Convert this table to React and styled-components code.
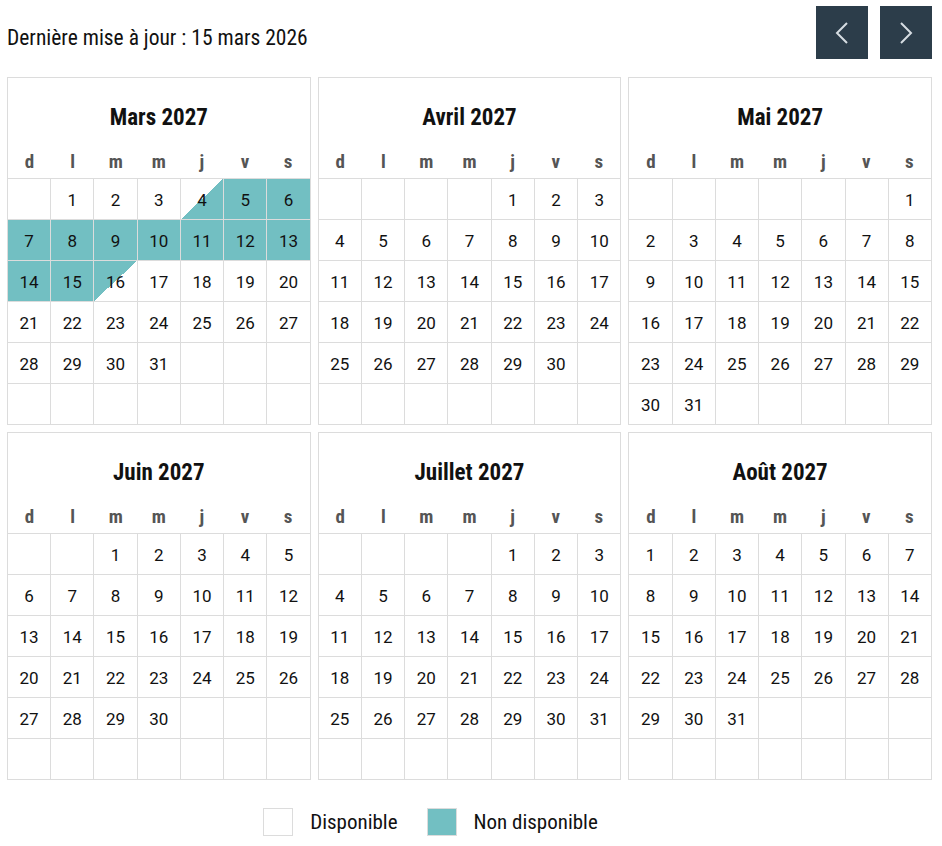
import styled, { createGlobalStyle, css } from 'styled-components';

const Global = createGlobalStyle`
  body {
    margin: 0;
    background: #fff;
    font-family: "Liberation Sans Narrow", "Roboto Condensed", Roboto, sans-serif;
    color: #111;
  }
`;

const TEAL = '#72bfc2';
const LINE = '#dcdcdc';

const Page = styled.div`
  width: 925px;
  padding: 0 10px 0 7px;
`;

const TopBar = styled.div`
  display: flex;
  align-items: center;
  justify-content: space-between;
  padding-top: 6px;
  margin-bottom: 18px;
`;

const Updated = styled.div`
  font-size: 21.5px;
  padding-top: 10px;
`;

const Nav = styled.div`
  display: flex;
  gap: 12px;
`;

const NavButton = styled.button`
  width: 52px;
  height: 53px;
  border: none;
  background: #2c3d4a;
  display: flex;
  align-items: center;
  justify-content: center;
  padding: 0;
  cursor: pointer;
`;

const Months = styled.div`
  display: grid;
  grid-template-columns: repeat(3, 1fr);
  gap: 7px 7px;
`;

const Month = styled.div`
  border: 1px solid ${LINE};
`;

const Title = styled.div`
  padding-top: 20px;
  height: 40px;
  line-height: 40px;
  text-align: center;
  font-weight: bold;
  font-size: 23px;
`;

const WeekDays = styled.div`
  display: grid;
  grid-template-columns: repeat(7, 1fr);
  padding-top: 8px;
  height: 32px;
  line-height: 32px;
`;

const WeekDay = styled.div`
  text-align: center;
  font-weight: bold;
  font-size: 19px;
  color: #555;
`;

const Days = styled.div`
  display: grid;
  grid-template-columns: repeat(7, 1fr);
  grid-auto-rows: 40px;
  gap: 1px;
  background: ${LINE};
  border-top: 1px solid ${LINE};
`;

const Day = styled.div`
  background: #fff;
  display: flex;
  align-items: center;
  justify-content: center;
  padding-top: 1px;
  font-family: Roboto, "Liberation Sans", sans-serif;
  font-size: 17px;
  color: #111;
  ${p => p.$state === 'full' && css`background: ${TEAL};`}
  ${p => p.$state === 'in' && css`background: linear-gradient(to bottom right, #fff 50%, ${TEAL} 50%);`}
  ${p => p.$state === 'out' && css`background: linear-gradient(to bottom right, ${TEAL} 50%, #fff 50%);`}
`;

const Legend = styled.div`
  display: flex;
  justify-content: center;
  align-items: center;
  padding-right: 78px;
  margin-top: 28px;
  font-size: 21px;
`;

const Swatch = styled.span`
  width: 28px;
  height: 26px;
  border: 1px solid ${LINE};
  background: ${p => p.$color || '#fff'};
  margin-right: 17px;
`;

const LegendLabel = styled.span`
  margin-right: 29px;
  &:last-child { margin-right: 0; }
`;

const MONTHS = ['Mars', 'Avril', 'Mai', 'Juin', 'Juillet', 'Août'];
const WEEK = ['d', 'l', 'm', 'm', 'j', 'v', 's'];

// booked: march 4 (arrival) to march 16 (departure)
function stateOf(month, day) {
  if (month !== 2) return null;
  if (day === 4) return 'in';
  if (day === 16) return 'out';
  if (day > 4 && day < 16) return 'full';
  return null;
}

function MonthCal({ index }) {
  const m = index + 2;
  const first = new Date(2027, m, 1).getDay();
  const count = new Date(2027, m + 1, 0).getDate();
  const cells = [];
  for (let i = 0; i < 42; i++) {
    const d = i - first + 1;
    cells.push(d >= 1 && d <= count ? d : null);
  }
  return (
    <Month>
      <Title>{MONTHS[index]} 2027</Title>
      <WeekDays>
        {WEEK.map((w, i) => <WeekDay key={i}>{w}</WeekDay>)}
      </WeekDays>
      <Days>
        {cells.map((d, i) => (
          <Day key={i} $state={d ? stateOf(m, d) : null}>{d}</Day>
        ))}
      </Days>
    </Month>
  );
}

const Chevron = ({ dir }) => (
  <svg width="14" height="22" viewBox="0 0 14 22" fill="none">
    <polyline
      points={dir === 'left' ? '12,1 2,11 12,21' : '2,1 12,11 2,21'}
      stroke="#d6dde2"
      strokeWidth="2"
    />
  </svg>
);

export default function App() {
  return (
    <Page>
      <Global />
      <TopBar>
        <Updated>Dernière mise à jour : 15 mars 2026</Updated>
        <Nav>
          <NavButton aria-label="précédent"><Chevron dir="left" /></NavButton>
          <NavButton aria-label="suivant"><Chevron dir="right" /></NavButton>
        </Nav>
      </TopBar>
      <Months>
        {MONTHS.map((_, i) => <MonthCal key={i} index={i} />)}
      </Months>
      <Legend>
        <Swatch />
        <LegendLabel>Disponible</LegendLabel>
        <Swatch $color={TEAL} />
        <LegendLabel>Non disponible</LegendLabel>
      </Legend>
    </Page>
  );
}
